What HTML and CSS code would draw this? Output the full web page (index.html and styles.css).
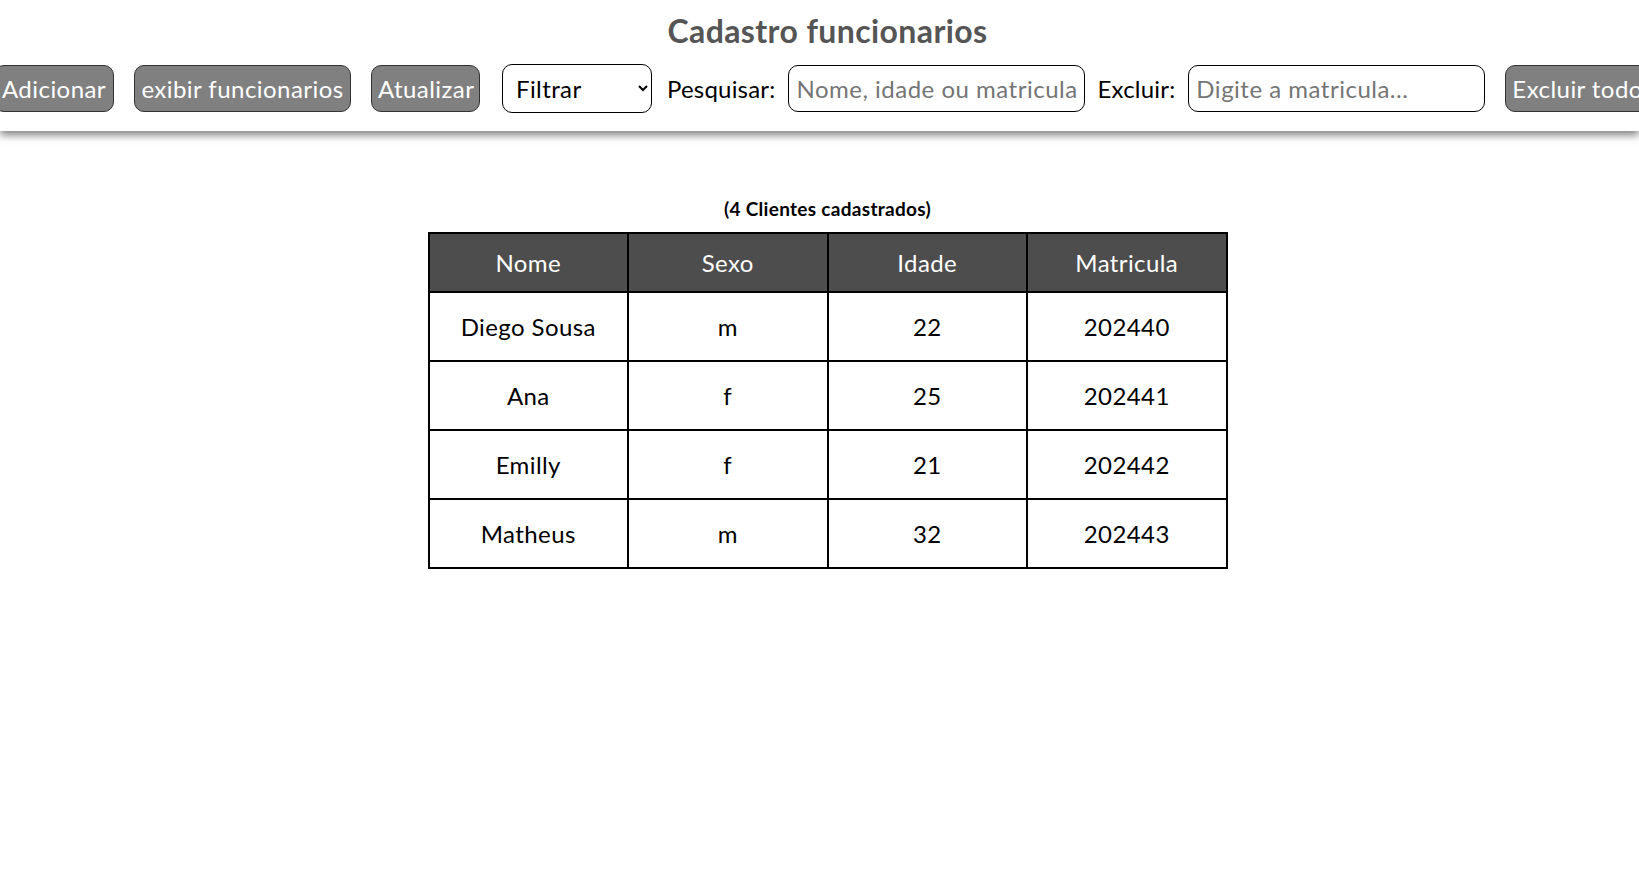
FILE: index.html
```html
<!DOCTYPE html>
<html lang="pt-BR">
<head>
<meta charset="utf-8">
<title>Cadastro funcionarios</title>
<link rel="stylesheet" href="styles.css">
</head>
<body>
<header class="header">
  <h1 class="title">Cadastro funcionarios</h1>
  <div class="toolbar">
    <button class="btn btn-add">Adicionar</button>
    <button class="btn btn-show">exibir funcionarios</button>
    <button class="btn btn-update">Atualizar</button>
    <select class="filter">
      <option>Filtrar</option>
      <option>Nome</option>
      <option>Idade</option>
      <option>Matricula</option>
    </select>
    <label class="label label-search" for="search">Pesquisar:</label>
    <input id="search" class="field" type="text" placeholder="Nome, idade ou matricula">
    <label class="label label-delete" for="delete">Excluir:</label>
    <input id="delete" class="field" type="text" placeholder="Digite a matricula...">
    <button class="btn btn-clear">Excluir todos</button>
  </div>
</header>
<main class="content">
  <p class="count">(4 Clientes cadastrados)</p>
  <table class="grid">
    <thead>
      <tr><th>Nome</th><th>Sexo</th><th>Idade</th><th>Matricula</th></tr>
    </thead>
    <tbody>
      <tr><td>Diego Sousa</td><td>m</td><td>22</td><td>202440</td></tr>
      <tr><td>Ana</td><td>f</td><td>25</td><td>202441</td></tr>
      <tr><td>Emilly</td><td>f</td><td>21</td><td>202442</td></tr>
      <tr><td>Matheus</td><td>m</td><td>32</td><td>202443</td></tr>
    </tbody>
  </table>
</main>
</body>
</html>
```
FILE: styles.css
```css
html, body {
  margin: 0;
  overflow-x: hidden;
  background: #fff;
  font-family: Lato, "Open Sans", "Noto Sans", sans-serif;
}

.header {
  padding: 14px 0 18px;
  background: #fff;
  box-shadow: 0 4px 8px rgba(0, 0, 0, 0.5);
}

.title {
  margin: 0;
  padding-left: 16px;
  text-align: center;
  font-size: 32px;
  line-height: 34px;
  letter-spacing: 0.4px;
  font-weight: 700;
  color: #555;
}

.toolbar {
  display: flex;
  align-items: center;
  margin: 16px 0 0 -6px;
  white-space: nowrap;
}

.toolbar > * {
  flex: none;
}

.btn {
  box-sizing: border-box;
  height: 47px;
  padding: 0 6px;
  border: 1px solid #333;
  border-radius: 10px;
  background: #808080;
  color: #fff;
  font-family: Lato, "Open Sans", sans-serif;
  font-size: 24px;
  letter-spacing: 0.45px;
  text-align: center;
  overflow: hidden;
}

.btn-add { width: 120px; }
.btn-show { width: 217px; margin-left: 20px; }
.btn-update { width: 109px; margin-left: 20px; }
.btn-clear { width: 160px; margin-left: 20px; text-align: left; }

.filter {
  box-sizing: border-box;
  width: 150px;
  height: 49px;
  margin-left: 22px;
  padding: 0 6px 0 9px;
  border: 1px solid #000;
  border-radius: 10px;
  background: #fff;
  color: #000;
  font-family: Lato, "Open Sans", sans-serif;
  font-size: 24px;
  letter-spacing: 0.4px;
}

.label {
  font-size: 24px;
  letter-spacing: 0.2px;
  color: #000;
}

.label-search { margin-left: 15px; }
.label-delete { margin-left: 12px; }

.field {
  box-sizing: border-box;
  width: 297px;
  height: 47px;
  margin-left: 13px;
  padding: 0 7px;
  border: 1px solid #000;
  border-radius: 10px;
  background: #fff;
  color: #000;
  font-family: Lato, "Open Sans", sans-serif;
  font-size: 24px;
  letter-spacing: 0.5px;
}

.field::placeholder {
  color: #757575;
}

.content {
  padding-left: 16px;
}

.count {
  margin: 67px 0 0;
  text-align: center;
  font-size: 19px;
  line-height: 22px;
  letter-spacing: 0.3px;
  font-weight: 700;
  color: #000;
}

.grid {
  width: 800px;
  margin: 12px auto 0;
  border-collapse: collapse;
  table-layout: fixed;
}

.grid th,
.grid td {
  border: 2px solid #000;
  text-align: center;
  font-size: 24px;
  line-height: 33px;
  letter-spacing: 0.4px;
  color: #000;
}

.grid th {
  padding: 12px;
  background: #4d4d4d;
  color: #fff;
  font-weight: 400;
}

.grid td {
  padding: 17px;
}
```
